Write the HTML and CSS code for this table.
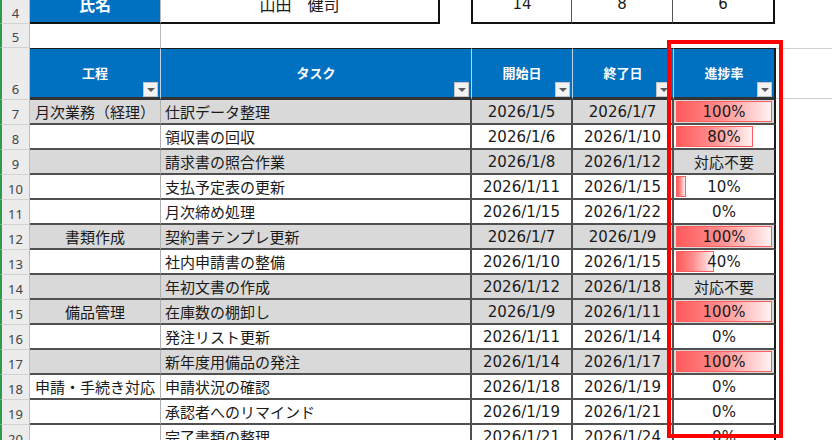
FILE: index.html
```html
<!DOCTYPE html>
<html lang="ja">
<head>
<meta charset="utf-8">
<title>タスク進捗</title>
<link rel="stylesheet" href="styles.css">
</head>
<body>
<div class="sheet">
  <div class="row r4">
    <div class="rh">4</div>
    <div class="c name-l">氏名</div>
    <div class="c name-v">山田　健司</div>
    <div class="c gap"></div>
    <div class="c cnt first">14</div>
    <div class="c cnt">8</div>
    <div class="c cnt last">6</div>
    <div class="c fill"></div>
  </div>
  <div class="row r5">
    <div class="rh">5</div>
    <div class="c b5"></div>
    <div class="c"></div>
    <div class="c"></div>
    <div class="c"></div>
    <div class="c"></div>
    <div class="c"></div>
  </div>
  <div class="row hdr">
    <div class="rh">6</div>
    <div class="h"><span class="ht">工程</span><span class="dd"></span></div>
    <div class="h"><span class="ht">タスク</span><span class="dd"></span></div>
    <div class="h"><span class="ht">開始日</span><span class="dd"></span></div>
    <div class="h"><span class="ht">終了日</span><span class="dd"></span></div>
    <div class="h last"><span class="ht">進捗率</span><span class="dd"></span></div>
    <div class="hfill"></div>
  </div>

  <div class="row d gray"><div class="rh">7</div><div class="c cb">月次業務（経理）</div><div class="c cc">仕訳データ整理</div><div class="c cd">2026/1/5</div><div class="c cd">2026/1/7</div><div class="c cf"><span class="bar" style="width:96px"></span><span class="pv">100%</span></div><div class="fill"></div></div>
  <div class="row d"><div class="rh">8</div><div class="c cb"></div><div class="c cc">領収書の回収</div><div class="c cd">2026/1/6</div><div class="c cd">2026/1/10</div><div class="c cf"><span class="bar" style="width:77px"></span><span class="pv">80%</span></div><div class="fill"></div></div>
  <div class="row d gray"><div class="rh">9</div><div class="c cb"></div><div class="c cc">請求書の照合作業</div><div class="c cd">2026/1/8</div><div class="c cd">2026/1/12</div><div class="c cf"><span class="pv">対応不要</span></div><div class="fill"></div></div>
  <div class="row d"><div class="rh">10</div><div class="c cb"></div><div class="c cc">支払予定表の更新</div><div class="c cd">2026/1/11</div><div class="c cd">2026/1/15</div><div class="c cf"><span class="bar" style="width:10px"></span><span class="pv">10%</span></div><div class="fill"></div></div>
  <div class="row d"><div class="rh">11</div><div class="c cb"></div><div class="c cc">月次締め処理</div><div class="c cd">2026/1/15</div><div class="c cd">2026/1/22</div><div class="c cf"><span class="pv">0%</span></div><div class="fill"></div></div>
  <div class="row d gray"><div class="rh">12</div><div class="c cb">書類作成</div><div class="c cc">契約書テンプレ更新</div><div class="c cd">2026/1/7</div><div class="c cd">2026/1/9</div><div class="c cf"><span class="bar" style="width:96px"></span><span class="pv">100%</span></div><div class="fill"></div></div>
  <div class="row d"><div class="rh">13</div><div class="c cb"></div><div class="c cc">社内申請書の整備</div><div class="c cd">2026/1/10</div><div class="c cd">2026/1/15</div><div class="c cf"><span class="bar" style="width:38px"></span><span class="pv">40%</span></div><div class="fill"></div></div>
  <div class="row d gray"><div class="rh">14</div><div class="c cb"></div><div class="c cc">年初文書の作成</div><div class="c cd">2026/1/12</div><div class="c cd">2026/1/18</div><div class="c cf"><span class="pv">対応不要</span></div><div class="fill"></div></div>
  <div class="row d gray"><div class="rh">15</div><div class="c cb">備品管理</div><div class="c cc">在庫数の棚卸し</div><div class="c cd">2026/1/9</div><div class="c cd">2026/1/11</div><div class="c cf"><span class="bar" style="width:96px"></span><span class="pv">100%</span></div><div class="fill"></div></div>
  <div class="row d"><div class="rh">16</div><div class="c cb"></div><div class="c cc">発注リスト更新</div><div class="c cd">2026/1/11</div><div class="c cd">2026/1/14</div><div class="c cf"><span class="pv">0%</span></div><div class="fill"></div></div>
  <div class="row d gray"><div class="rh">17</div><div class="c cb"></div><div class="c cc">新年度用備品の発注</div><div class="c cd">2026/1/14</div><div class="c cd">2026/1/17</div><div class="c cf"><span class="bar" style="width:96px"></span><span class="pv">100%</span></div><div class="fill"></div></div>
  <div class="row d"><div class="rh">18</div><div class="c cb">申請・手続き対応</div><div class="c cc">申請状況の確認</div><div class="c cd">2026/1/18</div><div class="c cd">2026/1/19</div><div class="c cf"><span class="pv">0%</span></div><div class="fill"></div></div>
  <div class="row d"><div class="rh">19</div><div class="c cb"></div><div class="c cc">承認者へのリマインド</div><div class="c cd">2026/1/19</div><div class="c cd">2026/1/21</div><div class="c cf"><span class="pv">0%</span></div><div class="fill"></div></div>
  <div class="row d"><div class="rh">20</div><div class="c cb"></div><div class="c cc">完了書類の整理</div><div class="c cd">2026/1/21</div><div class="c cd">2026/1/24</div><div class="c cf"><span class="pv">0%</span></div><div class="fill"></div></div>

  <div class="highlight"></div>
</div>
</body>
</html>
```

FILE: styles.css
```css
* { box-sizing: border-box; }
html, body { margin: 0; padding: 0; }
body {
  width: 832px;
  height: 440px;
  overflow: hidden;
  background: #ffffff;
  font-family: "DejaVu Sans", "Noto Sans CJK JP", sans-serif;
  font-size: 15px;
  color: #1a1a1a;
}
.sheet {
  position: relative;
  width: 832px;
  height: 440px;
  overflow: hidden;
}
.row {
  display: grid;
  grid-template-columns: 30px 131px 311px 101px 101px 102px 1fr;
}
.c {
  display: flex;
  align-items: center;
  white-space: nowrap;
  overflow: hidden;
}

/* row headers */
.rh {
  background: #ececec;
  border-left: 2px solid #2e9a4b;
  border-right: 1px solid #bdbdbd;
  border-bottom: 1px solid #d2d2d2;
  display: flex;
  align-items: flex-end;
  justify-content: center;
  padding-bottom: 2px;
  font-family: "Noto Sans", sans-serif;
  font-size: 13px;
  line-height: 15px;
  color: #444;
}

/* row 4 */
.r4 {
  height: 38px;
  margin-top: -14px;
  grid-template-columns: 30px 131px 279px 31px 101px 101px 102px 1fr;
}
.name-l {
  background: #0070c0;
  color: #fff;
  font-family: "Noto Sans CJK JP", sans-serif;
  font-weight: bold;
  font-size: 16px;
  justify-content: center;
  border-right: 1px solid #b8b8b8;
  border-bottom: 2px solid #111;
}
.name-v {
  font-family: "Noto Sans CJK JP", sans-serif;
  font-size: 16px;
  justify-content: center;
  border-right: 2px solid #111;
  border-bottom: 2px solid #111;
}
.cnt {
  justify-content: center;
  border-bottom: 2px solid #111;
  border-right: 1px solid #555;
}
.cnt.first { border-left: 2px solid #111; }
.cnt.last { border-right: 2px solid #111; }

/* row 5 */
.r5 { height: 24px; }
.b5 { border-right: 1px solid #b8b8b8; }

/* header row */
.hdr { height: 52px; }
.h {
  display: grid;
  background: #0070c0;
  border-top: 1px solid #1a1a1a;
  border-bottom: 3px solid #333;
  border-right: 1px solid #bcd3ea;
}
.h.last { border-right: 2px solid #1a1a1a; }
.ht, .dd { grid-area: 1 / 1; }
.ht {
  align-self: center;
  justify-self: center;
  color: #fff;
  font-family: "Noto Sans CJK JP", sans-serif;
  font-weight: bold;
  font-size: 13px;
  line-height: 16px;
}
.dd {
  align-self: end;
  justify-self: end;
  width: 15px;
  height: 15px;
  margin-right: 2px;
  background: #f3f3f3;
  border: 1px solid #c4c4c4;
  display: flex;
  align-items: center;
  justify-content: center;
}
.dd::after {
  content: "";
  width: 0;
  height: 0;
  border-left: 4px solid transparent;
  border-right: 4px solid transparent;
  border-top: 4px solid #5a5a5a;
  margin-top: 1px;
}
.hfill {
  border-top: 1px solid #cfcfcf;
  border-bottom: 1px solid #cfcfcf;
  margin-bottom: 1px;
}

/* data rows */
.d { height: 25px; }
.d .c { border-bottom: 2px solid #505050; }
.gray .c { background: #d9d9d9; }
.cb {
  justify-content: center;
  border-right: 1px solid #b0b0b0;
}
.cc {
  padding-left: 4px;
  border-right: 2px solid #505050;
}
.cd {
  justify-content: center;
  border-right: 2px solid #505050;
}
.cf {
  display: grid;
  border-right: 2px solid #1a1a1a;
}
.bar, .pv { grid-area: 1 / 1; }
.bar {
  justify-self: start;
  align-self: stretch;
  margin: 1px 0 1px 2px;
  border: 1px solid #ff5c5c;
  background: linear-gradient(to right, #ff5a5a 0%, #ff8d8d 45%, #fff2f2 100%);
}
.pv {
  justify-self: center;
  align-self: center;
  position: relative;
}

/* red highlight frame */
.highlight {
  position: absolute;
  left: 667px;
  top: 40px;
  width: 116px;
  height: 398px;
  border: 4px solid #ff0000;
}
```
